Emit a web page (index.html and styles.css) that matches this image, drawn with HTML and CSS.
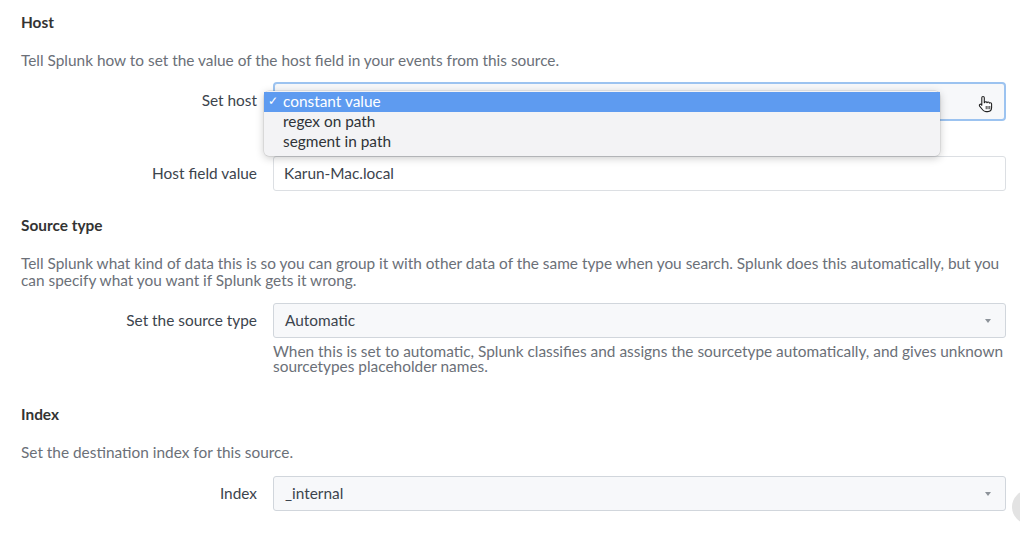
FILE: index.html
```html
<!DOCTYPE html>
<html>
<head>
<meta charset="utf-8">
<link rel="stylesheet" href="styles.css">
</head>
<body>
<div class="page">
  <section class="sec sec-host">
    <h2 class="sec-title">Host</h2>
    <p class="sec-desc">Tell Splunk how to set the value of the host field in your events from this source.</p>
    <div class="row row-sethost">
      <div class="lbl">Set host</div>
      <div class="field">
        <div class="select select-focus">
          <svg class="cursor" width="16" height="18" viewBox="0 0 16 18"><path d="M5 1.5c.8 0 1.3.5 1.3 1.3v5l.2-.1c.2-.6.7-.9 1.3-.9.6 0 1.1.4 1.2 1 .2-.5.7-.8 1.2-.8.7 0 1.2.5 1.2 1.1.3-.3.6-.4 1-.4.7 0 1.2.6 1.2 1.3v3.6c0 2.2-1.6 4-3.8 4H8c-1.3 0-2.4-.6-3.2-1.6L1.6 11.2c-.4-.6-.3-1.3.2-1.7.5-.4 1.2-.3 1.6.2l.4.6V2.8c0-.8.5-1.3 1.2-1.3z" fill="#fff" stroke="#222" stroke-width="1.1" stroke-linejoin="round"/><path d="M8.2 11v3.2M10 11v3.2M11.8 11v3.2" stroke="#222" stroke-width=".9"/></svg>
        </div>
        <ul class="menu">
          <li class="menu-item is-sel"><span class="chk">✓</span>constant value</li>
          <li class="menu-item"><span class="chk"></span>regex on path</li>
          <li class="menu-item"><span class="chk"></span>segment in path</li>
        </ul>
      </div>
    </div>
    <div class="row row-hostval">
      <div class="lbl">Host field value</div>
      <div class="field">
        <div class="input">Karun-Mac.local</div>
      </div>
    </div>
  </section>

  <section class="sec sec-src">
    <h2 class="sec-title">Source type</h2>
    <p class="sec-desc">Tell Splunk what kind of data this is so you can group it with other data of the same type when you search. Splunk does this automatically, but you can specify what you want if Splunk gets it wrong.</p>
    <div class="row">
      <div class="lbl">Set the source type</div>
      <div class="field">
        <div class="select"><span>Automatic</span><span class="caret"></span></div>
        <p class="help">When this is set to automatic, Splunk classifies and assigns the sourcetype automatically, and gives unknown sourcetypes placeholder names.</p>
      </div>
    </div>
  </section>

  <section class="sec sec-idx">
    <h2 class="sec-title">Index</h2>
    <p class="sec-desc">Set the destination index for this source.</p>
    <div class="row">
      <div class="lbl">Index</div>
      <div class="field">
        <div class="select"><span>_internal</span><span class="caret"></span></div>
      </div>
    </div>
  </section>
</div>
<div class="fab"></div>
</body>
</html>
```

FILE: styles.css
```css
html, body {
  margin: 0;
  padding: 0;
  background: #fff;
  overflow: hidden;
}
body {
  font-family: Lato, "Liberation Sans", sans-serif;
  font-size: 15.4px;
  color: #3c444d;
  width: 1020px;
  height: 543px;
  position: relative;
}
.page {
  padding: 14px 14px 0 21px;
}
.sec-title {
  margin: 0;
  font-size: 15.4px;
  line-height: 17px;
  font-weight: 700;
  color: #333;
}
.sec-desc {
  margin: 21px 0 0;
  line-height: 17px;
  color: #6b7078;
}
.row {
  display: grid;
  grid-template-columns: 236px 1fr;
  column-gap: 16px;
  margin-top: 15px;
}
.lbl {
  text-align: right;
  line-height: 34px;
  color: #3c444d;
}
.field {
  position: relative;
}
.select, .input {
  box-sizing: border-box;
  height: 35px;
  border: 1px solid #d1d6dc;
  border-radius: 3px;
  background: #f7f8fa;
  display: flex;
  align-items: center;
  justify-content: space-between;
  padding: 0 12px 1px 11px;
}
.input {
  background: #fff;
  border-color: #dcdfe3;
  padding-left: 10px;
}
.caret {
  width: 0;
  height: 0;
  border-left: 3.5px solid transparent;
  border-right: 3.5px solid transparent;
  border-top: 4px solid #8d939a;
  margin-right: 2px;
  margin-top: 1px;
}
.row-sethost { margin-top: 13px; }
.row-sethost .lbl { line-height: 37px; }
.select-focus {
  height: 39px;
  border: 2px solid #9cc3f0;
  border-radius: 4px;
  justify-content: flex-end;
  padding-right: 10px;
}
.cursor { margin-top: 6px; }
.row-hostval { margin-top: 35px; }
.menu {
  position: absolute;
  left: -9px;
  top: 9px;
  width: 676px;
  margin: 0;
  padding: 1px 0 4px;
  list-style: none;
  background: #f3f3f5;
  border-radius: 5px;
  box-shadow: 0 2px 8px rgba(0,0,0,0.22), 0 0 0 0.5px rgba(0,0,0,0.12);
  z-index: 2;
}
.menu-item {
  box-sizing: border-box;
  height: 20px;
  line-height: 18px;
  padding-bottom: 2px;
  color: #2f3338;
  display: flex;
  align-items: center;
}
.menu-item.is-sel {
  background: #5e9bf0;
  color: #fff;
}
.chk {
  display: inline-block;
  width: 19px;
  padding-left: 4px;
  box-sizing: border-box;
  font-size: 12px;
}
.sec-src { margin-top: 26px; }
.sec-src .row { margin-top: 14px; }
.help {
  margin: 6px 0 0;
  font-size: 15.4px;
  line-height: 15px;
  color: #6b7078;
}
.sec-idx { margin-top: 32px; }
.sec-idx .row { margin-top: 15px; }
.fab {
  position: absolute;
  left: 1012px;
  top: 490px;
  width: 34px;
  height: 34px;
  border-radius: 50%;
  background: #e3e3e3;
}
```
